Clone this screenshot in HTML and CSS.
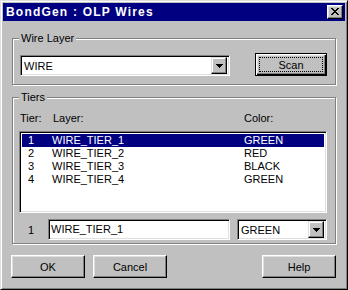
FILE: index.html
```html
<!DOCTYPE html>
<html>
<head>
	<meta charset="utf-8">
	<title>BondGen : OLP Wires</title>
	<link rel="stylesheet" href="styles.css">
</head>
<body>
	<div class="window">
		<div class="titlebar">
			<span class="title">BondGen : OLP Wires</span>
			<span class="close">
				<svg width="8" height="7" viewBox="0 0 8 7" shape-rendering="crispEdges"><path d="M0 0h2v1H0zM6 0h2v1H6zM1 1h2v1H1zM5 1h2v1H5zM2 2h4v1H2zM3 3h2v1H3zM2 4h4v1H2zM1 5h2v1H1zM5 5h2v1H5zM0 6h2v1H0zM6 6h2v1H6z" fill="#000"/></svg>
			</span>
		</div>

		<div class="content">
			<div class="group group-wire">
				<span class="legend">Wire Layer</span>
				<div class="combo combo-layer">
					<span class="value">WIRE</span>
					<span class="drop"><svg width="7" height="4" viewBox="0 0 7 4" shape-rendering="crispEdges"><path d="M0 0h7v1H0zM1 1h5v1H1zM2 2h3v1H2zM3 3h1v1H3z" fill="#000"/></svg></span>
				</div>
				<div class="btn btn-default"><span class="focus">Scan</span></div>
			</div>

			<div class="group group-tiers">
				<span class="legend">Tiers</span>
				<div class="heads">
					<span>Tier:</span>
					<span>Layer:</span>
					<span>Color:</span>
				</div>
				<div class="listbox">
					<div class="row selected"><span>1</span><span>WIRE_TIER_1</span><span>GREEN</span></div>
					<div class="row"><span>2</span><span>WIRE_TIER_2</span><span>RED</span></div>
					<div class="row"><span>3</span><span>WIRE_TIER_3</span><span>BLACK</span></div>
					<div class="row"><span>4</span><span>WIRE_TIER_4</span><span>GREEN</span></div>
				</div>
				<div class="edit-row">
					<span class="num">1</span>
					<div class="field edit">WIRE_TIER_1</div>
					<div class="combo combo-color">
						<span class="value">GREEN</span>
						<span class="drop"><svg width="7" height="4" viewBox="0 0 7 4" shape-rendering="crispEdges"><path d="M0 0h7v1H0zM1 1h5v1H1zM2 2h3v1H2zM3 3h1v1H3z" fill="#000"/></svg></span>
					</div>
				</div>
			</div>

			<div class="actions">
				<div class="btn">OK</div>
				<div class="btn">Cancel</div>
				<div class="btn btn-help">Help</div>
			</div>
		</div>
	</div>
</body>
</html>
```

FILE: styles.css
```css
:root {
	--face: #c0c0c0;
	--shadow: #808080;
	--light: #dfdfdf;
	--navy: #000080;
}

* {
	box-sizing: border-box;
}

body {
	margin: 0;
	background-color: var(--face);
	font-family: 'Liberation Sans', Arial, sans-serif;
	font-size: 11px;
	color: #000;
}

.window {
	width: 348px;
	height: 290px;
	background-color: var(--face);
	border: 1px solid;
	border-color: var(--light) #000 #000 var(--light);
	box-shadow: inset 1px 1px #fff, inset -1px -1px var(--shadow);
	padding: 2px;
}

.titlebar {
	display: flex;
	align-items: center;
	justify-content: space-between;
	height: 18px;
	background-color: var(--navy);
	padding: 0 2px 0 3px;
}

.title {
	color: #fff;
	font-size: 12px;
	font-weight: bold;
	letter-spacing: 1.2px;
	line-height: 18px;
}

.close {
	display: flex;
	align-items: center;
	justify-content: center;
	width: 16px;
	height: 14px;
	background-color: var(--face);
	border: 1px solid;
	border-color: #fff #000 #000 #fff;
	box-shadow: inset -1px -1px var(--shadow), inset 1px 1px var(--light);
	padding: 0 1px 1px 0;
}

.content {
	padding: 17px 9px 0 9px;
}

/* etched group boxes */
.group {
	position: relative;
	border: 1px solid var(--shadow);
	box-shadow: inset 1px 1px #fff, 1px 1px #fff;
}

.legend {
	position: absolute;
	top: -7px;
	left: 6px;
	padding: 0 2px 0 2px;
	line-height: 13px;
	background-color: var(--face);
}

.group-wire {
	display: flex;
	justify-content: space-between;
	align-items: flex-start;
	height: 47px;
	padding: 14px 8px 0 7px;
}

.group-tiers {
	height: 147px;
	margin-top: 12px;
	padding: 14px 0 0 6px;
}

/* sunken fields */
.field,
.combo,
.listbox {
	background-color: #fff;
	border: 1px solid;
	border-color: var(--shadow) #fff #fff var(--shadow);
	box-shadow: inset 1px 1px #000, inset -1px -1px var(--light);
}

.combo {
	display: flex;
	align-items: center;
	justify-content: space-between;
	height: 21px;
	padding: 2px;
}

.combo .value {
	padding-left: 1px;
}

.combo-layer {
	width: 210px;
	margin-top: 2px;
}

.drop {
	display: flex;
	align-items: center;
	justify-content: center;
	width: 16px;
	height: 17px;
	background-color: var(--face);
	border: 1px solid;
	border-color: var(--light) #000 #000 var(--light);
	box-shadow: inset -1px -1px var(--shadow), inset 1px 1px #fff;
	padding-top: 1px;
}

/* push buttons */
.btn {
	display: flex;
	align-items: center;
	justify-content: center;
	width: 74px;
	height: 23px;
	border: 1px solid;
	border-color: #fff #000 #000 #fff;
	box-shadow: inset -1px -1px var(--shadow), inset 1px 1px var(--light);
}

.btn-default {
	width: 72px;
	border: 1px solid #000;
	box-shadow: inset 1px 1px #fff, inset -1px -1px #000, inset -2px -2px var(--shadow), inset 2px 2px var(--light);
	padding: 3px;
}

.focus {
	display: flex;
	align-items: center;
	justify-content: center;
	width: 100%;
	height: 100%;
	border: 1px dotted #000;
}

.heads {
	display: grid;
	grid-template-columns: 33px 191px auto;
	padding-left: 1px;
	line-height: 13px;
}

.listbox {
	width: 308px;
	height: 82px;
	margin-top: 6px;
	padding: 2px;
}

.row {
	display: grid;
	grid-template-columns: 24px 192px auto;
	height: 13px;
	line-height: 13px;
	padding-left: 6px;
}

.selected {
	background-color: var(--navy);
	color: #fff;
}

.edit-row {
	display: grid;
	grid-template-columns: 22px 182px 90px;
	column-gap: 7px;
	align-items: center;
	margin-top: 6px;
}

.num {
	padding-left: 9px;
}

.edit {
	height: 21px;
	line-height: 19px;
	padding-left: 2px;
}

.actions {
	display: flex;
	gap: 8px;
	margin: 11px 0 0 -1px;
}

.btn-help {
	margin-left: auto;
}
```
